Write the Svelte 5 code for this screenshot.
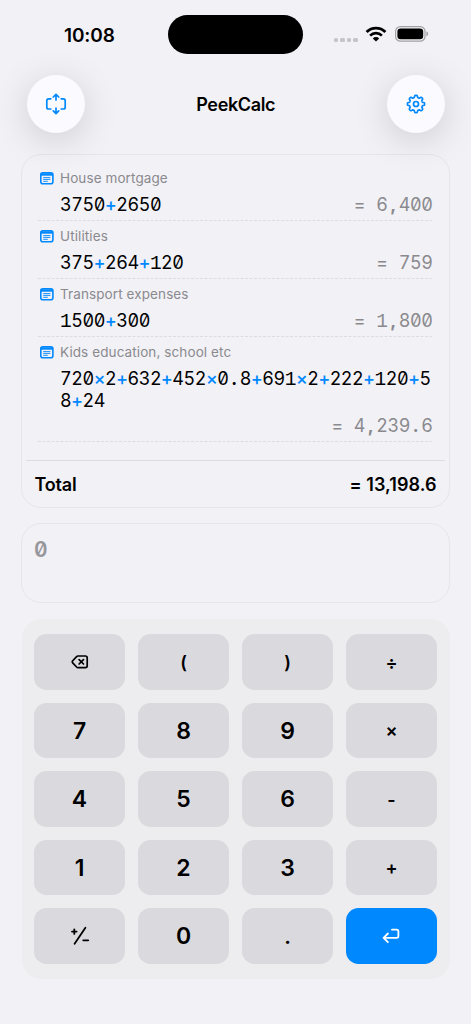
<script>
	let entries = [
		{ label: 'House mortgage', expr: '3750+2650', result: '6,400' },
		{ label: 'Utilities', expr: '375+264+120', result: '759' },
		{ label: 'Transport expenses', expr: '1500+300', result: '1,800' },
		{ label: 'Kids education, school etc', expr: '720×2+632+452×0.8+691×2+222+120+58+24', result: '4,239.6', long: true }
	]

	let keys = [
		'del', '(', ')', '÷',
		'7', '8', '9', '×',
		'4', '5', '6', '-',
		'1', '2', '3', '+',
		'sign', '0', '.', 'enter'
	]

	const isOp = c => '+×÷-'.includes(c)
	const isPoint = c => '.,'.includes(c)
	const isDigit = k => /^\d$/.test(k)

	// rounded outline of the settings cog
	function cog(teeth, mid, depth) {
		let points = []
		for (let i = 0; i < 128; i++) {
			const a = (i / 128) * Math.PI * 2 - Math.PI / 2
			const wave = Math.tanh(Math.cos((a + Math.PI / 2) * teeth) * 2.2)
			const r = mid + depth * wave
			points.push(`${(12 + Math.cos(a) * r).toFixed(2)} ${(12 + Math.sin(a) * r).toFixed(2)}`)
		}
		return 'M' + points.join('L') + 'Z'
	}
</script>

<main>
	<div class="status">
		<span class="time">10:08</span>
		<span class="island"></span>
		<div class="signals">
			<span class="dots"><i></i><i></i><i></i><i></i></span>
			<svg class="wifi" width="22" height="16" viewBox="0 0 22 16">
				<path d="M1.6 6a13.4 13.4 0 0 1 18.8 0" fill="none" stroke="#000" stroke-width="2.9" />
				<path d="M5.1 9.6a8.4 8.4 0 0 1 11.8 0" fill="none" stroke="#000" stroke-width="2.7" />
				<path d="M11 15.6l-3.2-3.2a4.5 4.5 0 0 1 6.4 0z" />
			</svg>
			<svg class="battery" width="34" height="16" viewBox="0 0 34 16">
				<rect x=".6" y=".6" width="29.4" height="14.6" rx="4.8" fill="none" stroke="#a2a1a6" stroke-width="1.2" />
				<rect x="2.4" y="2.5" width="25.8" height="10.8" rx="3.3" />
				<path d="M31.4 5.6c2.4.6 2.4 4 0 4.6z" fill="#a2a1a6" />
			</svg>
		</div>
	</div>

	<header>
		<button class="round" aria-label="Resize">
			<svg width="24" height="24" viewBox="0 0 24 24" fill="none" stroke="#0088ff" stroke-width="1.7" stroke-linecap="round" stroke-linejoin="round">
				<path d="M6.8 6.8H4.6Q2.8 6.8 2.8 8.6v6.6q0 1.8 1.8 1.8h2.2M17.2 6.8h2.2q1.8 0 1.8 1.8v6.6q0 1.8-1.8 1.8h-2.2" />
				<path d="M12 8V2.6M9.3 5L12 2.3l2.7 2.7M12 16v5.4M9.3 18.9l2.7 2.7 2.7-2.7" />
			</svg>
		</button>
		<h1>PeekCalc</h1>
		<button class="round" aria-label="Settings">
			<svg width="24" height="24" viewBox="0 0 24 24" fill="none" stroke="#0088ff" stroke-width="1.7" stroke-linejoin="round">
				<path d={cog(8, 7.6, 1)} />
				<circle cx="12" cy="12" r="2.5" />
			</svg>
		</button>
	</header>

	<section class="tape">
		<div class="entries">
			{#each entries as entry}
				<div class="entry" class:long={entry.long}>
					<div class="label">
						<svg width="14" height="13" viewBox="0 0 14 13">
							<rect x=".8" y=".9" width="12.1" height="10.8" rx="2" fill="none" stroke="#0088ff" stroke-width="1.6" />
							<path d="M.7 1.5h12.2v2.2H.7z" fill="#0088ff" />
							<path d="M3.2 5.6h7.2M3.2 7.4h7.2M3.2 9.3h4.6" stroke="#0088ff" stroke-width=".9" />
						</svg>
						<span>{entry.label}</span>
					</div>
					<div class="line">
						<div class="expr mono">{#each entry.expr as c}<span class:op={isOp(c)} class:one={c === '1'} class:point={isPoint(c)}>{c}</span>{/each}</div>
						<div class="result mono">{#each '= ' + entry.result as c}<span class:one={c === '1'} class:point={isPoint(c)}>{c}</span>{/each}</div>
					</div>
					<svg class="rule" width="394" height="1"><path d="M0 .5h394" stroke="#dddce2" stroke-dasharray="3 1.5" /></svg>
				</div>
			{/each}
		</div>
		<div class="total">
			<span>Total</span>
			<span class="sum">= 13,198.6</span>
		</div>
	</section>

	<section class="input mono"><span>0</span></section>

	<section class="pad">
		{#each keys as key}
			<button class="key" class:digit={isDigit(key)} class:dot={key === '.'} class:enter={key === 'enter'} aria-label={key}>
				{#if key === 'del'}
					<svg width="18" height="16" viewBox="0 0 18 16" fill="none" stroke="#000" stroke-width="1.7" stroke-linecap="round" stroke-linejoin="round">
						<path d="M7 2h7.4q1.8 0 1.8 1.8v8q0 1.8-1.8 1.8H7q-.8 0-1.4-.6L1.7 8.8q-.9-1 0-2l3.9-4.2Q6.2 2 7 2z" />
						<path d="M8.1 5.6l4.4 4.4M12.5 5.6l-4.4 4.4" />
					</svg>
				{:else if key === 'sign'}
					<svg width="20" height="20" viewBox="0 0 20 20" fill="none" stroke="#000" stroke-width="1.8" stroke-linecap="round">
						<path d="M4.6 17.8L15.4 1.7M2 5.6h4.6M4.3 3.3v4.6M13.2 14.3h5" />
					</svg>
				{:else if key === 'enter'}
					<svg width="18" height="16" viewBox="0 0 18 16" fill="none" stroke="#fff" stroke-width="1.8" stroke-linecap="round" stroke-linejoin="round">
						<path d="M10 1.7h4.6q1.8 0 1.8 1.8v4.6q0 1.8-1.8 1.8H1.8M5.9 5.5L1.6 9.9l4.3 4.3" />
					</svg>
				{:else}
					{key}
				{/if}
			</button>
		{/each}
	</section>
</main>

<style>
	:global(body) {
		margin: 0;
		background: #f2f1f6;
	}

	main {
		box-sizing: border-box;
		width: 471px;
		height: 1024px;
		overflow: hidden;
		background: #f2f1f6;
		color: #000;
		font-family: Inter, 'Liberation Sans', sans-serif;
	}

	button {
		border: 0;
		padding: 0;
		font-family: inherit;
		color: inherit;
	}

	svg {
		display: block;
	}

	.status {
		display: grid;
		grid-template-columns: 168px 135px 168px;
		align-items: center;
		height: 40px;
		padding-top: 14px;
	}

	.time {
		padding: 2px 0 0 64px;
		font-size: 19px;
		font-weight: 600;
		letter-spacing: -0.1px;
	}

	.island {
		height: 39px;
		border-radius: 20px;
		background: #000;
	}

	.signals {
		display: flex;
		align-items: center;
		padding-left: 31px;
	}

	.dots {
		display: flex;
		gap: 2.4px;
		padding-top: 12px;
	}

	.dots i {
		width: 4.1px;
		height: 4.1px;
		border-radius: 1.5px;
		background: #c5c4c9;
	}

	.wifi {
		margin: 0 8px 0 7px;
	}

	header {
		display: flex;
		justify-content: space-between;
		align-items: center;
		height: 58px;
		padding: 21px 26px 0 26.5px;
	}

	.round {
		display: grid;
		place-items: center;
		width: 58px;
		height: 58px;
		border-radius: 50%;
		background: #fafaff;
		box-shadow: 0 7px 36px rgba(0, 0, 0, 0.15);
	}

	h1 {
		margin: 0;
		font-size: 18px;
		font-weight: 600;
		letter-spacing: -0.35px;
	}

	.tape {
		box-sizing: border-box;
		height: 354px;
		margin: 20.5px 21px 0;
		padding: 14px 4px 0;
		border: 1px solid #e6e5ea;
		border-radius: 20px;
	}

	.entries {
		height: 291.5px;
		padding: 0 12px;
	}

	.entry {
		display: flex;
		flex-direction: column;
		height: 58px;
	}

	.entry.long {
		height: 106px;
	}

	.label {
		display: flex;
		align-items: center;
		gap: 6px;
		height: 19px;
		padding-left: 2px;
		color: #8a8a8e;
		font-size: 13.5px;
		letter-spacing: 0.1px;
	}

	.line {
		display: flex;
		flex: none;
		flex-wrap: wrap;
		justify-content: space-between;
		align-content: flex-start;
		height: 26px;
		padding: 6px 0 0 22px;
	}

	.long .line {
		height: 73px;
	}

	.mono {
		font-size: 18px;
		line-height: 22px;
		font-feature-settings: 'zero', 'tnum';
	}

	.mono span {
		display: inline-block;
		width: 11.24px;
		text-align: center;
		white-space: pre;
	}

	.mono .one {
		font-family: 'Liberation Mono', monospace;
		font-size: 19.5px;
		line-height: 20px;
	}

	.mono .op {
		color: #0088ff;
		font-weight: 500;
	}

	.mono .point {
		font-weight: 700;
	}

	.result {
		margin-left: auto;
		margin-right: 0.5px;
		color: #8a8a8e;
	}

	.long .result {
		margin-top: 3.5px;
	}

	.total {
		display: flex;
		justify-content: space-between;
		align-items: center;
		height: 46px;
		padding: 0 8.5px;
		border-top: 1px solid #dddce2;
		font-size: 18px;
		font-weight: 600;
		letter-spacing: -0.2px;
	}

	.sum {
		letter-spacing: 0.05px;
	}

	.input {
		box-sizing: border-box;
		height: 80px;
		margin: 15.5px 21px 0;
		padding: 14.5px 12px;
		border: 1px solid #e6e5ea;
		border-radius: 20px;
		color: #97969a;
		font-size: 21px;
		font-weight: 600;
	}

	.input span {
		width: 13px;
	}

	.pad {
		box-sizing: border-box;
		display: grid;
		grid-template-columns: repeat(4, 1fr);
		grid-auto-rows: 55.4px;
		gap: 13.1px 13.3px;
		height: 360px;
		margin: 15.5px 21.5px 0;
		padding: 15.9px 12.7px 0;
		border-radius: 19px;
		background: #ededef;
	}

	.key {
		display: grid;
		place-items: center;
		border-radius: 12.5px;
		background: #dad9de;
		font-size: 18px;
		font-weight: 600;
	}

	.digit {
		font-size: 23px;
	}

	.dot {
		font-size: 21px;
	}

	.enter {
		background: #0088ff;
	}
</style>
